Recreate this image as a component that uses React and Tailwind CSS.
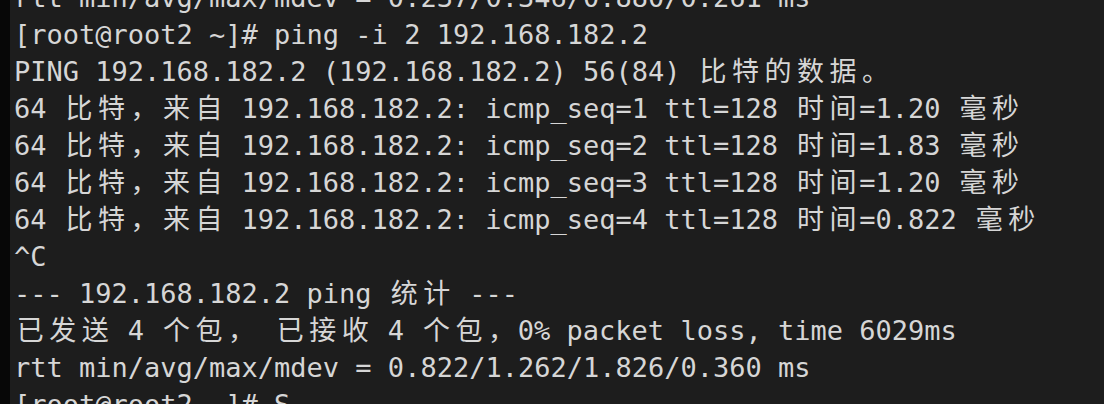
import React from "react";

const LINES = [
  "rtt min/avg/max/mdev = 0.237/0.346/0.880/0.261 ms",
  "[root@root2 ~]# ping -i 2 192.168.182.2",
  "PING 192.168.182.2 (192.168.182.2) 56(84) 比特的数据。",
  "64 比特，来自 192.168.182.2: icmp_seq=1 ttl=128 时间=1.20 毫秒",
  "64 比特，来自 192.168.182.2: icmp_seq=2 ttl=128 时间=1.83 毫秒",
  "64 比特，来自 192.168.182.2: icmp_seq=3 ttl=128 时间=1.20 毫秒",
  "64 比特，来自 192.168.182.2: icmp_seq=4 ttl=128 时间=0.822 毫秒",
  "^C",
  "--- 192.168.182.2 ping 统计 ---",
  "已发送 4 个包， 已接收 4 个包，0% packet loss, time 6029ms",
  "rtt min/avg/max/mdev = 0.822/1.262/1.826/0.360 ms",
  "[root@root2 ~]# S",
];

const CJK = /[\u3000-\u9fff\uff00-\uffef]/;

function Line({ text }) {
  const parts = [];
  let buf = "";
  Array.from(text).forEach((ch, i) => {
    if (CJK.test(ch)) {
      if (buf) {
        parts.push(<span key={"a" + i}>{buf}</span>);
        buf = "";
      }
      parts.push(
        <span key={"c" + i} className="inline-block w-[2ch] text-center">
          {ch}
        </span>
      );
    } else {
      buf += ch;
    }
  });
  if (buf) parts.push(<span key="end">{buf}</span>);
  return <div className="h-[37px] leading-[37px] whitespace-pre">{parts}</div>;
}

export default function App() {
  return (
    <div className="flex w-[1104px] h-[404px] overflow-hidden bg-[#1d1d1d]">
      <div className="w-[10px] shrink-0 bg-[#070707]" />
      <div
        className="flex-1 pl-[4px] mt-[-21px] text-[27px] text-[#d6d6d6] antialiased"
        style={{ fontFamily: '"DejaVu Sans Mono", "Noto Sans CJK SC", monospace' }}
      >
        {LINES.map((l, i) => (
          <Line key={i} text={l} />
        ))}
      </div>
    </div>
  );
}
